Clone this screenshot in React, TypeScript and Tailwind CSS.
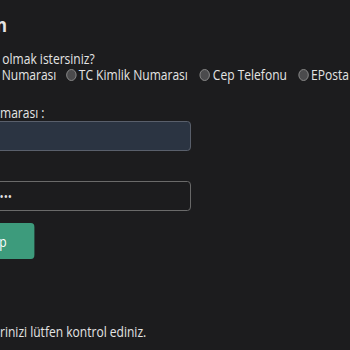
import React from "react";

function Radio({ className = "" }: { className?: string }) {
  return (
    <span
      className={
        "inline-block w-[12px] h-[12px] shrink-0 rounded-full border border-[#8c8c8c] bg-[#4b4b4d] " +
        className
      }
    />
  );
}

export default function App() {
  return (
    <div className="w-[350px] h-[350px] overflow-hidden bg-[#1c1c1e] text-[#e4e4e4] font-['Open_Sans','Noto_Sans',sans-serif] text-[14px]">
      <div className="origin-top-left scale-x-[0.86] w-[700px]">
        <div className="-ml-[240px] w-[940px] pt-[14px]">
          <h1 className="h-[22px] leading-[22px] text-[20px] font-bold whitespace-nowrap">
            <span className="inline-block w-[235px] text-right">Giriş Yapı</span>n
          </h1>
          <div className="mt-[15px] h-[16px] leading-[16px] whitespace-nowrap">
            <span className="inline-block w-[239px] text-right">Hangisiyle üye</span> olmak istersiniz?
          </div>
          <div className="h-[16px] flex items-center whitespace-nowrap leading-[16px]">
            <span className="inline-flex shrink-0 w-[242px] justify-end items-center">
              <Radio className="mr-[3px]" />
              <span>Müşteri&nbsp;</span>
            </span>
            <span className="shrink-0">Numarası</span>
            <Radio className="ml-[11px]" />
            <span className="ml-[3px] shrink-0">TC Kimlik Numarası</span>
            <Radio className="ml-[14px]" />
            <span className="ml-[3px] shrink-0">Cep Telefonu</span>
            <Radio className="ml-[13px]" />
            <span className="ml-[3px] shrink-0">EPosta</span>
          </div>
          <div className="mt-[22px] h-[16px] leading-[16px] whitespace-nowrap">
            <span className="inline-block w-[240px] text-right">TC Kimlik Nu</span>marası :
          </div>
          <div className="w-[462px] h-[30px] rounded-[4px] border border-[#5e6470] bg-[#2b3442]" />
          <div className="mt-[14px] h-[16px] leading-[16px] whitespace-nowrap">Şifre :</div>
          <div className="w-[462px] h-[30px] rounded-[4px] border border-[#707070] flex items-center whitespace-nowrap">
            <span className="inline-block w-[253px] text-right text-[13px] leading-[16px]">•••••••••••</span>
          </div>
          <div className="mt-[12px] w-[280px] h-[36px] rounded-[4px] bg-[#3d9b7c] text-white flex items-center whitespace-nowrap">
            <span className="inline-block shrink-0 w-[239px] text-right">Giriş Ya</span>p
          </div>
          <div className="mt-[65px] h-[16px] leading-[16px] whitespace-nowrap">
            <span className="inline-block w-[240px] text-right">Bilgile</span>rinizi lütfen kontrol ediniz.
          </div>
        </div>
      </div>
    </div>
  );
}
